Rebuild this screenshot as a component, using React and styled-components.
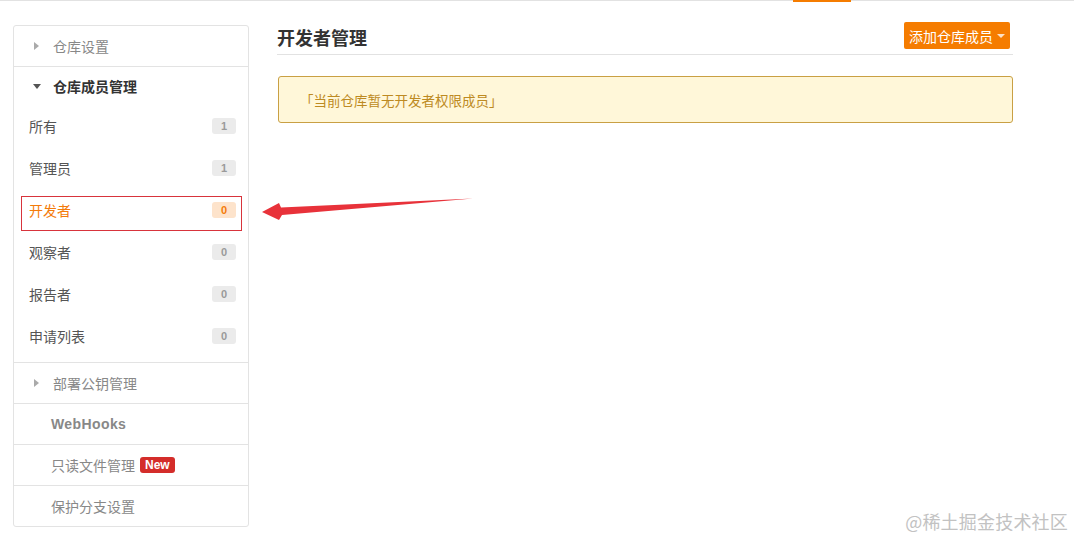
import styled, { createGlobalStyle } from 'styled-components';

const Global = createGlobalStyle`
   html, body { margin: 0; padding: 0; background: #fff; }
   body { font-family: "Noto Sans CJK SC", "Liberation Sans", sans-serif; color: #333; }
`;

const Page = styled.div`
   position: relative;
   width: 1074px;
   height: 537px;
   overflow: hidden;
`;

const TopLine = styled.div`
   display: flex;
   height: 1px;
   background: #e2e2e2;
`;

const TopIndicator = styled.div`
   margin-left: 793px;
   width: 58px;
   height: 2px;
   background: #f57c00;
`;

const Layout = styled.div`
   display: flex;
   align-items: flex-start;
   gap: 28px;
   padding: 21px 0 0 13px;
`;

const Side = styled.nav`
   margin-top: 3px;
   width: 234px;
   border: 1px solid #e3e3e3;
   border-radius: 3px;
   display: flex;
   flex-direction: column;
`;

const Section = styled.div`
   display: flex;
   flex-direction: column;
   border-top: ${p => (p.$first ? 'none' : '1px solid #e3e3e3')};
   padding-bottom: ${p => (p.$open ? '5px' : '0')};
`;

const Head = styled.div`
   display: flex;
   align-items: center;
   height: ${p => (p.$short ? '38px' : '40px')};
   padding-left: ${p => (p.$caret ? '20px' : '37px')};
   font-size: 14px;
   font-weight: ${p => (p.$bold ? 700 : 400)};
   color: ${p => (p.$dark ? '#333' : '#888')};
`;

const Caret = styled.span`
   width: 0;
   height: 0;
   margin-right: 14px;
   ${p =>
      p.$down
         ? `border-left: 4px solid transparent; border-right: 4px solid transparent; border-top: 5px solid #555; margin-left: -1px; margin-right: 12px;`
         : `border-top: 4px solid transparent; border-bottom: 4px solid transparent; border-left: 5px solid #aaa;`}
`;

const Latin = styled.span`
   font-family: "Liberation Sans", "Noto Sans CJK SC", sans-serif;
   font-size: 14px;
   letter-spacing: 0.4px;
`;

const NewTag = styled.span`
   margin-left: 5px;
   padding: 0 5px;
   height: 16px;
   line-height: 16px;
   border-radius: 3px;
   background: #d42d2a;
   color: #fff;
   font-family: "Liberation Sans", sans-serif;
   font-weight: 700;
   font-size: 12px;
`;

const Item = styled.div`
   position: relative;
   display: flex;
   align-items: center;
   justify-content: space-between;
   height: 42px;
   padding: 0 12px 0 15px;
   font-size: 14px;
   color: ${p => (p.$active ? '#f47b0a' : '#555')};
   ${p =>
      p.$marked &&
      `&::after {
         content: '';
         position: absolute;
         inset: 7px 6px 0 7px;
         border: 1px solid #d8343c;
      }`}
`;

const Count = styled.span`
   min-width: 24px;
   height: 16px;
   line-height: 16px;
   border-radius: 3px;
   text-align: center;
   font-family: "Liberation Sans", sans-serif;
   font-size: 11px;
   font-weight: 700;
   background: ${p => (p.$active ? '#fde3cb' : '#ebebeb')};
   color: ${p => (p.$active ? '#f47b0a' : '#9a9a9a')};
`;

const Main = styled.main`
   width: 736px;
   display: flex;
   flex-direction: column;
`;

const TitleBar = styled.div`
   display: flex;
   align-items: center;
   justify-content: space-between;
   height: 32px;
   border-bottom: 1px solid #e2e2e2;
`;

const Title = styled.h2`
   margin: 0 0 2px;
   font-size: 18px;
   font-weight: 700;
   color: #333;
`;

const AddButton = styled.button`
   display: flex;
   align-items: center;
   gap: 4px;
   height: 27px;
   margin: 0 3px 5px 0;
   padding: 0 5px 0 5px;
   border: none;
   border-radius: 2px;
   background: #f57c00;
   color: #fff;
   font-family: inherit;
   font-size: 14px;
`;

const BtnCaret = styled.span`
   width: 0;
   height: 0;
   border-left: 4px solid transparent;
   border-right: 4px solid transparent;
   border-top: 4px solid #fde0c4;
`;

const Notice = styled.div`
   margin: 21px 0 0 1px;
   height: 45px;
   display: flex;
   align-items: center;
   padding-left: 21px;
   border: 1px solid #c9a044;
   border-radius: 3px;
   background: #fff7d9;
   color: #bd8a22;
   font-size: 13.5px;
`;

const Arrow = styled.svg`
   position: absolute;
   left: 0;
   top: 0;
   pointer-events: none;
`;

const Watermark = styled.div`
   position: absolute;
   right: 6px;
   bottom: 3px;
   font-size: 18px;
   color: #c2c2c2;
   letter-spacing: 0.2px;
`;

const members = [
   { name: '所有', count: 1 },
   { name: '管理员', count: 1 },
   { name: '开发者', count: 0, active: true },
   { name: '观察者', count: 0 },
   { name: '报告者', count: 0 },
   { name: '申请列表', count: 0 },
];

export default function App() {
   return (
      <Page>
         <Global />
         <TopLine>
            <TopIndicator />
         </TopLine>
         <Layout>
            <Side>
               <Section $first>
                  <Head $caret><Caret />仓库设置</Head>
               </Section>
               <Section $open>
                  <Head $caret $bold $dark $short><Caret $down />仓库成员管理</Head>
                  {members.map(m => (
                     <Item key={m.name} $active={m.active} $marked={m.active}>
                        {m.name}
                        <Count $active={m.active}>{m.count}</Count>
                     </Item>
                  ))}
               </Section>
               <Section>
                  <Head $caret><Caret />部署公钥管理</Head>
               </Section>
               <Section>
                  <Head $bold><Latin>WebHooks</Latin></Head>
               </Section>
               <Section>
                  <Head>只读文件管理<NewTag>New</NewTag></Head>
               </Section>
               <Section>
                  <Head>保护分支设置</Head>
               </Section>
            </Side>
            <Main>
               <TitleBar>
                  <Title>开发者管理</Title>
                  <AddButton>添加仓库成员<BtnCaret /></AddButton>
               </TitleBar>
               <Notice>「当前仓库暂无开发者权限成员」</Notice>
            </Main>
         </Layout>
         <Arrow width="1074" height="537" viewBox="0 0 1074 537">
            <polygon
               points="262,212 279,203 281,207.5 473,198.5 282,215 279,220"
               fill="#e8323a"
            />
         </Arrow>
         <Watermark>@稀土掘金技术社区</Watermark>
      </Page>
   );
}
